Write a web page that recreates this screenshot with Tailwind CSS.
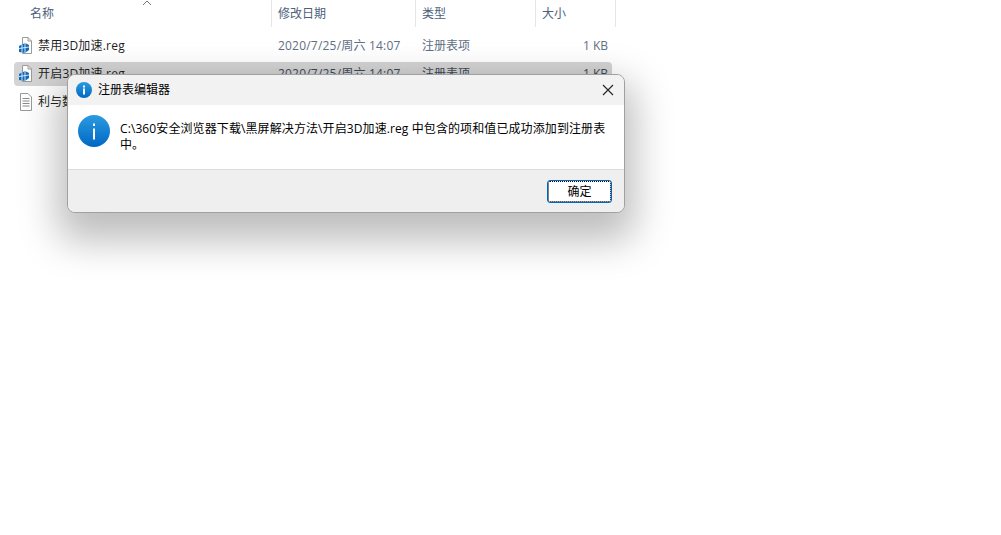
<!DOCTYPE html>
<html lang="zh">
<head>
<meta charset="utf-8">
<title>注册表编辑器</title>
<script src="https://cdn.jsdelivr.net/npm/@tailwindcss/browser@4"></script>
</head>
<body class="bg-white overflow-hidden font-['Open_Sans','Noto_Sans_CJK_SC',sans-serif]">
<div class="relative w-[1001px] h-[535px] overflow-hidden">

  <!-- explorer list behind the dialog -->
  <div class="w-[616px] text-xs">
    <div class="relative flex h-[27px] text-[#4c607a]">
      <svg class="absolute left-[142px] top-0" width="10" height="6" viewBox="0 0 10 6"><path d="M1 5 L5 1 L9 5" fill="none" stroke="#777" stroke-width="1"/></svg>
      <div class="w-[272px] pl-[30px] pt-[6px] border-r border-[#e5e5e5]">名称</div>
      <div class="w-[144px] pl-[6px] pt-[6px] border-r border-[#e5e5e5]">修改日期</div>
      <div class="w-[120px] pl-[6px] pt-[6px] border-r border-[#e5e5e5]">类型</div>
      <div class="w-[80px] pl-[6px] pt-[6px] border-r border-[#e5e5e5]">大小</div>
    </div>
    <div class="flex flex-col gap-1 pt-[7px] pl-[14px] w-[612px]">
      <div class="flex items-center h-6 rounded">
        <svg class="ml-[4px] w-4 h-[18px]" viewBox="0 0 16 18"><path d="M4.5 .5 H10 L13.5 4 V16.5 H4.5 Z" fill="#fff" stroke="#9a9a9a"/><path d="M10 .5 V4 H13.5" fill="none" stroke="#9a9a9a"/><path d="M1 9 L7 6 L11 8 V13 L7 16 L1 15 Z" fill="#0f6cbd"/><path d="M1 11.5 L11 10 M4 7.5 L4 15.5 M7 6 V16" stroke="#fff" stroke-width=".8"/></svg>
        <span class="ml-[4px] w-[240px] tracking-[0.2px] text-[#1f1f1f]">禁用3D加速.reg</span>
        <span class="w-[144px] tracking-[0.2px] text-[#5f6f85]">2020/7/25/周六 14:07</span>
        <span class="w-[120px] text-[#5f6f85]">注册表项</span>
        <span class="w-[66px] text-right text-[#5f6f85]">1 KB</span>
      </div>
      <div class="flex items-center h-6 rounded bg-[#d4d4d4]">
        <svg class="ml-[4px] w-4 h-[18px]" viewBox="0 0 16 18"><path d="M4.5 .5 H10 L13.5 4 V16.5 H4.5 Z" fill="#fff" stroke="#9a9a9a"/><path d="M10 .5 V4 H13.5" fill="none" stroke="#9a9a9a"/><path d="M1 9 L7 6 L11 8 V13 L7 16 L1 15 Z" fill="#0f6cbd"/><path d="M1 11.5 L11 10 M4 7.5 L4 15.5 M7 6 V16" stroke="#fff" stroke-width=".8"/></svg>
        <span class="ml-[4px] w-[240px] tracking-[0.2px] text-[#1f1f1f]">开启3D加速.reg</span>
        <span class="w-[144px] tracking-[0.2px] text-[#3f4a58]">2020/7/25/周六 14:07</span>
        <span class="w-[120px] text-[#3f4a58]">注册表项</span>
        <span class="w-[66px] text-right text-[#3f4a58]">1 KB</span>
      </div>
      <div class="flex items-center h-6 rounded">
        <svg class="ml-[4px] w-4 h-[18px]" viewBox="0 0 16 18"><path d="M2.5 .5 H10 L13.5 4 V17.5 H2.5 Z" fill="#fff" stroke="#9a9a9a"/><path d="M4.5 5.5 H11.5 M4.5 8 H11.5 M4.5 10.5 H11.5 M4.5 13 H11.5" stroke="#8a8a8a"/></svg>
        <span class="ml-[4px] text-[#1f1f1f]">利与数据.txt</span>
      </div>
    </div>
  </div>

  <!-- registry editor dialog -->
  <div class="absolute left-[67px] top-[74px] w-[558px] h-[139px] flex flex-col rounded-lg overflow-hidden border border-[#a0a0a0] bg-[#f0f0f0] text-xs text-black shadow-[0_18px_38px_10px_rgba(0,0,0,0.26)]">
    <div class="flex items-center h-[30px] shrink-0 bg-[#f2f2f2] pl-[8px] pr-[10px]">
      <svg width="16" height="16" viewBox="0 0 32 32"><defs><linearGradient id="small" x1="0" y1="0" x2="0" y2="1"><stop offset="0" stop-color="#2b9be0"/><stop offset="1" stop-color="#0068c4"/></linearGradient></defs><circle cx="16" cy="16" r="16" fill="url(#small)"/><rect x="14" y="13" width="4" height="12" fill="#fff"/><rect x="14" y="7" width="4" height="4" fill="#fff"/></svg>
      <span class="ml-[6px]">注册表编辑器</span>
      <svg class="ml-auto" width="12" height="12" viewBox="0 0 12 12"><path d="M1 1 L11 11 M11 1 L1 11" stroke="#222" stroke-width="1.1"/></svg>
    </div>
    <div class="flex h-[65px] shrink-0 bg-white border-b border-[#dcdcdc] pl-[10px] pr-[12px]">
      <svg class="mt-[10px] shrink-0" width="32" height="32" viewBox="0 0 32 32"><defs><linearGradient id="big" x1="0" y1="0" x2="0" y2="1"><stop offset="0" stop-color="#2b9be0"/><stop offset="1" stop-color="#0068c4"/></linearGradient></defs><circle cx="16" cy="16" r="16" fill="url(#big)"/><rect x="15" y="13.5" width="2" height="11" fill="#fff"/><rect x="15" y="8.5" width="2" height="2.5" fill="#fff"/></svg>
      <p class="ml-[10px] pt-[16px] leading-[16px] tracking-[0.1px]">C:\360安全浏览器下载\黑屏解决方法\开启3D加速.reg 中包含的项和值已成功添加到注册表中。</p>
    </div>
    <div class="flex flex-1 justify-end items-start pt-[10px] pr-[12px] bg-[#efefef]">
      <button class="w-[65px] h-[23px] rounded-[3px] bg-white border border-[#0067c0] outline-1 outline-dotted outline-black -outline-offset-2 text-xs">确定</button>
    </div>
  </div>
</div>
</body>
</html>
